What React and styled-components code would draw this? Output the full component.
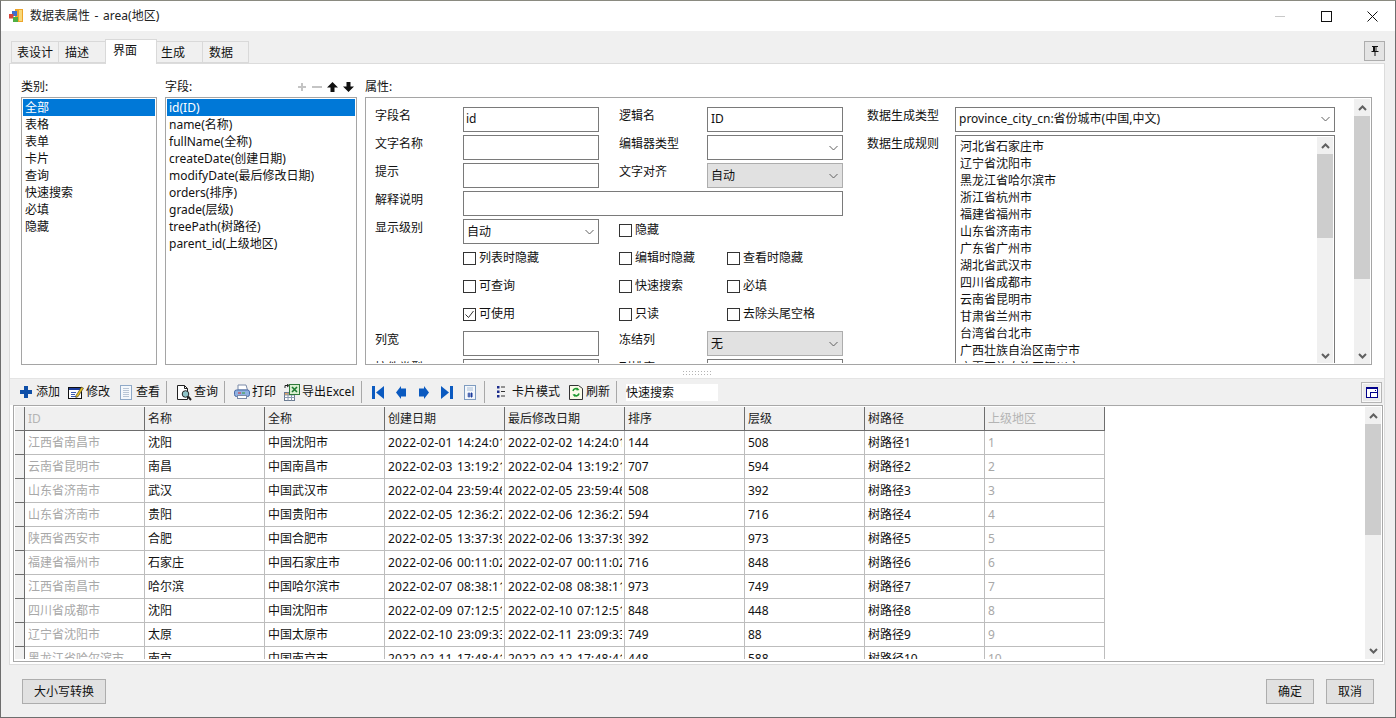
import React from "react";
import styled, { createGlobalStyle } from "styled-components";

const Global = createGlobalStyle`
  html, body { margin: 0; padding: 0; height: 100%; background: #f0f0f0; overflow: hidden; }
  * { box-sizing: border-box; }
  body { font: 12px/16px "Noto Sans", "Noto Sans CJK SC", sans-serif; color: #111; }
`;

const Frame = styled.div`
  width: 1396px; height: 718px; display: flex; flex-direction: column;
  background: #f0f0f0; border: 1px solid #6e6e6e; border-top-color: #8a8a80; overflow: hidden;
`;
const TitleBar = styled.div`
  flex: 0 0 30px; background: #fff; display: flex; align-items: center; padding-left: 8px; gap: 6px;
  font-size: 12px; color: #222;
`;
const TitleText = styled.div`flex: 1; word-spacing: 1.5px;`;
const WinButtons = styled.div`display: flex; margin-right: 0;`;
const WinButton = styled.div`
  width: 46px; height: 30px; display: flex; align-items: center; justify-content: center;
`;
const TabRow = styled.div`
  flex: 0 0 32px; display: flex; align-items: flex-end; padding: 0 10px 0 10px; position: relative;
`;
const Tab = styled.div`
  height: ${p => p.$active ? 25 : 22}px; padding-left: ${p => p.$pl}px; width: ${p => p.$w}px;
  margin-bottom: ${p => p.$active ? -1 : 0}px; z-index: ${p => p.$active ? 2 : 1};
  background: ${p => p.$active ? "#fff" : "#f0f0f0"};
  border: 1px solid #d9d9d9; border-bottom: ${p => p.$active ? "none" : "1px solid #d9d9d9"}; margin-right: -1px;
  line-height: 21px;
  white-space: nowrap;
`;
const PinButton = styled.button`
  margin-left: auto; margin-bottom: 2px; width: 21px; height: 20px; padding: 0; background: #e4e4e4;
  border: 1px solid #adadad; display: flex; align-items: center; justify-content: center;
`;
const Panel = styled.div`
  flex: 0 0 602px; margin: 0 10px 0 8px; background: #fff; border: 1px solid #dcdcdc; display: flex; flex-direction: column;
`;
const Upper = styled.div`
  flex: 0 0 301px; display: flex; gap: 8px; padding: 14px 12px 0 11px;
`;
const Col = styled.div`
  width: ${p => p.$w ? p.$w + "px" : "auto"}; flex: ${p => p.$w ? "0 0 auto" : 1}; display: flex; flex-direction: column; min-width: 0;
`;
const ColHead = styled.div`
  flex: 0 0 19px; display: flex; align-items: center; justify-content: space-between; padding-bottom: 2px;
  line-height: 16px;
`;
const MoveIcons = styled.div`display: flex; gap: 5px; padding-right: 3px;`;
const ListBox = styled.div`
  height: 268px; border: 1px solid #a5a5a5; padding: 1px;
`;
const ListItem = styled.div`
  height: 17px; line-height: 17px; padding-left: 2px; white-space: nowrap;
  background: ${p => p.$sel ? "#0078d7" : "transparent"}; color: ${p => p.$sel ? "#fff" : "#111"};
`;
const PropBox = styled.div`
  height: 268px; border: 1px solid #a5a5a5; display: flex; overflow: hidden; padding: 0;
`;
const PropForm = styled.div`
  flex: 0 0 988px; padding: 9px 0 0 9px; display: grid;
  grid-template-columns: 88px 136px 20px 88px 20px 116px 24px 88px 380px;
  grid-auto-rows: 25px; row-gap: 3px; height: 265px; overflow: hidden; align-content: start;
`;
const PropLabel = styled.div`
  grid-column: ${p => p.$col}; line-height: 17px; white-space: nowrap;
`;
const Field = styled.div`
  grid-column: ${p => p.$col}; height: 25px; border: 1px solid ${p => p.$gray ? "#adadad" : "#7a7a7a"};
  background: ${p => p.$gray ? "#e1e1e1" : "#fff"}; padding: 0 4px 0 ${p => p.$pl || 3}px;
  padding-bottom: ${p => p.$up ? 2 : 0}px;
  display: flex; align-items: center; justify-content: space-between; line-height: 16px; white-space: nowrap; overflow: hidden;
`;
const Check = styled.label`
  grid-column: ${p => p.$col}; display: flex; align-items: center; gap: 3px; height: 25px; padding-bottom: 3px; white-space: nowrap;
`;
const CheckBoxMark = styled.span`
  width: 13px; height: 13px; border: 1px solid #333; background: #fff; display: flex; align-items: center; justify-content: center; flex: none;
`;
const RuleBox = styled.div`
  grid-column: 9; grid-row: 2 / span 9; height: 229px; border: 1px solid #7a7a7a; border-bottom: none; display: flex; overflow: hidden;
`;
const RuleList = styled.div`flex: 1; padding: 2px 0 0 4px; line-height: 17px; overflow: hidden; white-space: nowrap;`;
const Scroll = styled.div`
  flex: 0 0 16px; width: 16px; background: #f0f0f0; display: flex; flex-direction: column; margin: ${p => p.$m || 0};
`;
const ScrollArrow = styled.div`
  flex: 0 0 17px; display: flex; align-items: center; justify-content: center;
`;
const ScrollThumb = styled.div`flex: 0 0 ${p => p.$h}px; background: #cdcdcd;`;
const ScrollTrack = styled.div`flex: 1;`;
const Splitter = styled.div`
  flex: 0 0 13px; display: flex; align-items: center; justify-content: center; position: relative; padding-left: 0;
`;
const Grip = styled.div`
  width: 30px; height: 6px; margin-top: 3px;
  background-image: radial-gradient(#b4b4b4 0.7px, transparent 0.8px);
  background-size: 3px 3px;
`;
const ToolbarRow = styled.div`
  flex: 0 0 27px; background: #f0f0f0; border-top: 1px solid #e4e4e4; display: flex; align-items: center; padding: 0 2px 0 10px;
`;
const ToolButton = styled.div`
  display: flex; align-items: center; gap: ${p => p.$gap ?? 2}px; height: 22px; white-space: nowrap;
  margin-right: ${p => p.$mr ?? 0}px; width: ${p => p.$w ? p.$w + "px" : "auto"};
`;
const ToolSep = styled.div`width: 1px; height: 22px; background: #a8a8a8; margin-right: ${p => p.$mr ?? 9}px;`;
const SearchBox = styled.div`
  width: 92px; height: 17px; background: #fff; line-height: 17px; color: #111; white-space: nowrap;
`;
const DockButton = styled.button`
  margin-left: auto; width: 21px; height: 21px; padding: 0; background: #e9e9e9; border: 1px solid #b5b5b5; outline: 1px solid #f8f8f8; outline-offset: -2px;
  display: flex; align-items: center; justify-content: center;
`;
const GridBox = styled.div`
  flex: 0 0 257px; margin: 0 1px 0 3px; border: 1px solid #a8a8a8; display: flex; background: #fff; overflow: hidden; padding: 1px 1px 2px 1px;
`;
const GridMain = styled.div`flex: 1; overflow: hidden; min-width: 0;`;
const GRow = styled.div`
  display: flex; height: 24px; width: 1091px; overflow: hidden;
`;
const Indicator = styled.div`
  flex: 0 0 10px; background: #f0f0f0;
  border-right: 1px solid #6d6d6d; border-bottom: 1px solid #6d6d6d;
`;
const HCell = styled.div`
  flex: 0 0 120px; min-width: 0; background: #f0f0f0; padding: 0 0 0 3px; line-height: 23px; color: ${p => p.$dim ? "#b4b4b4" : "#222"};
  border-right: 1px solid #6d6d6d; border-bottom: 1px solid #6d6d6d; white-space: nowrap; overflow: hidden;
`;
const Cell = styled.div`
  flex: 0 0 120px; min-width: 0; overflow: hidden; line-height: 23px; color: ${p => p.$dim ? "#a8a8a8" : "#111"};
  border-right: 1px solid #bdbdbd; border-bottom: 1px solid #bdbdbd;
`;
const CellText = styled.span`
  display: block; margin: 0 2px 0 3px; white-space: nowrap; overflow: hidden;
  letter-spacing: ${p => p.$date ? ".2px" : 0}; word-spacing: ${p => p.$date ? "1px" : 0};
`;
const Footer = styled.div`
  flex: 1; display: flex; justify-content: space-between; padding: 14px 21px 0 21px;
`;
const FootGroup = styled.div`display: flex; gap: 12px;`;
const FootButton = styled.button`
  width: ${p => p.$w}px; height: 25px; background: #e1e1e1; border: 1px solid #adadad; padding: 0;
  font: 12px/16px "Noto Sans", "Noto Sans CJK SC", sans-serif; color: #111;
`;

const Chevron = ({ color = "#606060" }) => (
  <svg width="9" height="6" viewBox="0 0 9 6"><path d="M.5 1l4 4 4-4" fill="none" stroke={color} strokeWidth="1" /></svg>
);
const ScrollUp = () => (
  <svg width="9" height="6" viewBox="0 0 9 6"><path d="M1 5l3.500-3.500L8 5" fill="none" stroke="#606060" strokeWidth="2" /></svg>
);
const ScrollDown = () => (
  <svg width="9" height="6" viewBox="0 0 9 6"><path d="M1 1l3.500 3.500L8 1" fill="none" stroke="#606060" strokeWidth="2" /></svg>
);
const AppIcon = () => (
  <svg width="15" height="14" viewBox="0 0 15 14">
    <rect x="6" y="0" width="8" height="13" fill="#eda52a" />
    <rect x="10" y="1" width="3" height="11" fill="#f9d878" />
    <rect x="3" y="2" width="5" height="5" fill="#3f6fd0" />
    <rect x="0" y="5" width="4.500" height="4.500" fill="#d8453a" />
    <rect x="4" y="8" width="5" height="5" fill="#4fb043" />
  </svg>
);
const Plus = ({ c }) => (<svg width="10" height="10" viewBox="0 0 10 10"><path d="M4 1h2v3h3v2H6v3H4V6H1V4h3z" fill={c} /></svg>);
const Minus = () => (<svg width="10" height="10" viewBox="0 0 10 10"><rect x="0" y="4" width="10" height="2" fill="#c4c4c4" /></svg>);
const Up = () => (<svg width="11" height="10" viewBox="0 0 11 10"><path d="M5.500 0L11 5.500H7.500V10h-4V5.500H0z" fill="#111" /></svg>);
const Down = () => (<svg width="11" height="10" viewBox="0 0 11 10"><path d="M5.500 10L11 4.500H7.500V0h-4v4.500H0z" fill="#111" /></svg>);

const IAdd = () => (<svg width="12" height="12" viewBox="0 0 12 12"><path d="M4 0h4v4h4v4H8v4H4V8H0V4h4z" fill="#0f4fa8" /></svg>);
const IEdit = () => (
  <svg width="16" height="16" viewBox="0 0 16 16">
    <rect x=".5" y="3.500" width="13" height="11" fill="#fff" stroke="#111" />
    <rect x="1" y="4" width="12" height="2" fill="#1c3c9c" />
    <path d="M3 8.500h5M3 10.500h4M3 12.500h6" stroke="#3b5cb0" />
    <path d="M8 11.500l5.500-8.500 2 1.200-5.500 8.500-2.200 .8z" fill="#e8c020" stroke="#333" strokeWidth=".6" />
  </svg>
);
const IView = () => (
  <svg width="12" height="15" viewBox="0 0 12 15">
    <rect x=".5" y=".5" width="11" height="14" fill="#f4f8fc" stroke="#8fa9c8" />
    <path d="M3 3.500h6M3 5.500h6M3 7.500h6M3 9.500h6M3 11.500h6" stroke="#b9c6d6" />
  </svg>
);
const IQuery = () => (
  <svg width="16" height="17" viewBox="0 0 16 17">
    <path d="M1.500 1.500h7l3 3v11h-10z" fill="#fff" stroke="#222" />
    <path d="M8.500 1.500v3h3" fill="none" stroke="#222" />
    <circle cx="9.500" cy="10" r="3.300" fill="#8fc4c8" stroke="#222" />
    <path d="M12 12.500l3 3.500" stroke="#222" strokeWidth="2" />
  </svg>
);
const IPrint = () => (
  <svg width="16" height="16" viewBox="0 0 16 16">
    <path d="M4 1h8l1.500 5H4z" fill="#fff" stroke="#7b8aa8" />
    <rect x=".5" y="6" width="15" height="6.500" rx="2" fill="#8fb0e0" stroke="#4a6ca8" />
    <rect x="3.500" y="11.500" width="9" height="3" fill="#fff" stroke="#7b8aa8" />
    <rect x="4" y="8.500" width="3" height="1" fill="#d83030" />
    <rect x="8" y="8.500" width="3" height="1" fill="#38a038" />
  </svg>
);
const IExcel = () => (
  <svg width="16" height="17" viewBox="0 0 16 17">
    <rect x=".5" y="8.500" width="10" height="8" fill="#fff" stroke="#6a7a90" />
    <rect x="1" y="9" width="9" height="2" fill="#e8a860" />
    <path d="M.5 11h10M.5 13.500h10M4 8.500v8M7.500 8.500v8" stroke="#8a9ab0" />
    <rect x="5.500" y=".5" width="10" height="10" fill="#d8eed0" stroke="#2f7a3a" />
    <path d="M8 3l5 5M13 3l-5 5" stroke="#1c7a30" strokeWidth="1.600" />
    <path d="M1 4V1.500h3M3 0l2 1.500L3 3" fill="none" stroke="#222" />
  </svg>
);
const First = () => (<svg width="12" height="13" viewBox="0 0 12 13"><rect width="3" height="13" fill="#0b5ac0" /><path d="M12 0v13L4 6.500z" fill="#0b5ac0" /></svg>);
const Prev = () => (<svg width="10" height="13" viewBox="0 0 10 13"><path d="M5 0v2.500h5v8H5V13L0 6.500z" fill="#0b5ac0" /></svg>);
const Next = () => (<svg width="10" height="13" viewBox="0 0 10 13"><path d="M5 0v2.500H0v8h5V13l5-6.500z" fill="#0b5ac0" /></svg>);
const Last = () => (<svg width="12" height="13" viewBox="0 0 12 13"><rect x="9" width="3" height="13" fill="#0b5ac0" /><path d="M0 0v13l8-6.500z" fill="#0b5ac0" /></svg>);
const IPage = () => (
  <svg width="12" height="15" viewBox="0 0 12 15">
    <rect x=".5" y=".5" width="11" height="14" fill="#f4f8fc" stroke="#7f9cc0" />
    <path d="M3 3h6M3 5h6" stroke="#a9bdd6" />
    <path d="M5 7.500v5M7.500 7.500v5M3.500 9h5.500M3.500 11h5.500" stroke="#1c3c9c" />
  </svg>
);
const ICard = () => (
  <svg width="8" height="12" viewBox="0 0 8 12">
    <path d="M0 0h2.500v2.500H0zM0 4.500h2.500V7H0zM0 9h2.500v2.500H0z" fill="#1c2c8c" />
    <path d="M4 1h4M4 5.500h4M4 10h4" stroke="#333" />
  </svg>
);
const IRefresh = () => (
  <svg width="14" height="16" viewBox="0 0 14 16">
    <path d="M.5 1.500h9l4 3v11H.5z" fill="#fbfbe8" stroke="#333" />
    <path d="M4 7a3 3 0 0 1 5-1.500" fill="none" stroke="#1f9a30" strokeWidth="1.600" />
    <path d="M10 9.500a3 3 0 0 1-5 1.500" fill="none" stroke="#1f9a30" strokeWidth="1.600" />
    <path d="M8 3.500l2.500 2.500-3 .5zM6 13l-2.500-2.500 3-.5z" fill="#1f9a30" />
  </svg>
);
const Pin = () => (
  <svg width="10" height="12" viewBox="0 0 10 12"><path d="M2 1h6v1H7v4h1.500v1H5.500v4h-1V7H1.500V6H3V2H2z" fill="#111" /><rect x="5.500" y="2" width="1" height="4" fill="#fff" /></svg>
);
const Dock = () => (
  <svg width="12" height="11" viewBox="0 0 12 11">
    <rect x=".5" y=".5" width="11" height="10" fill="#fff" stroke="#00008b" />
    <rect x="0" y="0" width="12" height="2" fill="#00008b" />
    <rect x="9" y="3" width="1" height="1" fill="#00008b" />
    <rect x="4" y="5" width="8" height="1" fill="#00008b" />
    <rect x="4" y="5" width="1" height="6" fill="#00008b" />
  </svg>
);

const cats = ["全部", "表格", "表单", "卡片", "查询", "快速搜索", "必填", "隐藏"];
const fields = ["id(ID)", "name(名称)", "fullName(全称)", "createDate(创建日期)", "modifyDate(最后修改日期)", "orders(排序)", "grade(层级)", "treePath(树路径)", "parent_id(上级地区)"];
const rules = ["河北省石家庄市", "辽宁省沈阳市", "黑龙江省哈尔滨市", "浙江省杭州市", "福建省福州市", "山东省济南市", "广东省广州市", "湖北省武汉市", "四川省成都市", "云南省昆明市", "甘肃省兰州市", "台湾省台北市", "广西壮族自治区南宁市", "宁夏回族自治区银川市"];
const headers = ["ID", "名称", "全称", "创建日期", "最后修改日期", "排序", "层级", "树路径", "上级地区"];
const rows = [
  ["江西省南昌市", "沈阳", "中国沈阳市", "2022-02-01 14:24:01", "2022-02-02 14:24:01", "144", "508", "树路径1", "1"],
  ["云南省昆明市", "南昌", "中国南昌市", "2022-02-03 13:19:21", "2022-02-04 13:19:21", "707", "594", "树路径2", "2"],
  ["山东省济南市", "武汉", "中国武汉市", "2022-02-04 23:59:46", "2022-02-05 23:59:46", "508", "392", "树路径3", "3"],
  ["山东省济南市", "贵阳", "中国贵阳市", "2022-02-05 12:36:27", "2022-02-06 12:36:27", "594", "716", "树路径4", "4"],
  ["陕西省西安市", "合肥", "中国合肥市", "2022-02-05 13:37:39", "2022-02-06 13:37:39", "392", "973", "树路径5", "5"],
  ["福建省福州市", "石家庄", "中国石家庄市", "2022-02-06 00:11:02", "2022-02-07 00:11:02", "716", "848", "树路径6", "6"],
  ["江西省南昌市", "哈尔滨", "中国哈尔滨市", "2022-02-07 08:38:11", "2022-02-08 08:38:11", "973", "749", "树路径7", "7"],
  ["四川省成都市", "沈阳", "中国沈阳市", "2022-02-09 07:12:51", "2022-02-10 07:12:51", "848", "448", "树路径8", "8"],
  ["辽宁省沈阳市", "太原", "中国太原市", "2022-02-10 23:09:33", "2022-02-11 23:09:33", "749", "88", "树路径9", "9"],
  ["黑龙江省哈尔滨市", "南京", "中国南京市", "2022-02-11 17:48:41", "2022-02-12 17:48:41", "448", "588", "树路径10", "10"],
];

export default function App() {
  return (
    <Frame>
      <Global />
      <TitleBar>
        <AppIcon />
        <TitleText>数据表属性 - area(地区)</TitleText>
        <WinButtons>
          <WinButton>
            <svg width="10" height="1" viewBox="0 0 10 1"><rect width="10" height="1" fill="#c8c8c8" /></svg>
          </WinButton>
          <WinButton>
            <svg width="11" height="11" viewBox="0 0 11 11"><rect x=".5" y=".5" width="10" height="10" fill="none" stroke="#111" /></svg>
          </WinButton>
          <WinButton>
            <svg width="11" height="11" viewBox="0 0 11 11"><path d="M.5 .5l10 10M10.500 .5l-10 10" stroke="#111" /></svg>
          </WinButton>
        </WinButtons>
      </TitleBar>
      <TabRow>
        <Tab $w={48} $pl={5}>表设计</Tab>
        <Tab $w={48} $pl={6}>描述</Tab>
        <Tab $active $w={52} $pl={7}>界面</Tab>
        <Tab $w={47} $pl={4}>生成</Tab>
        <Tab $w={47} $pl={6}>数据</Tab>
        <PinButton><Pin /></PinButton>
      </TabRow>
      <Panel>
        <Upper>
          <Col $w={136}>
            <ColHead>类别:</ColHead>
            <ListBox>{cats.map((c, i) => <ListItem key={c} $sel={i === 0}>{c}</ListItem>)}</ListBox>
          </Col>
          <Col $w={192}>
            <ColHead>字段:
              <MoveIcons><Plus c="#c4c4c4" /><Minus /><Up /><Down /></MoveIcons>
            </ColHead>
            <ListBox>{fields.map((c, i) => <ListItem key={c} $sel={i === 0}>{c}</ListItem>)}</ListBox>
          </Col>
          <Col>
            <ColHead>属性:</ColHead>
            <PropBox>
              <PropForm>
                <PropLabel $col="1">字段名</PropLabel>
                <Field $col="2" $up $pl={2}>id</Field>
                <PropLabel $col="4">逻辑名</PropLabel>
                <Field $col="5 / span 2" $up>ID</Field>
                <PropLabel $col="8">数据生成类型</PropLabel>
                <Field $col="9" $up>province_city_cn:省份城市(中国,中文)<Chevron /></Field>

                <PropLabel $col="1">文字名称</PropLabel>
                <Field $col="2" />
                <PropLabel $col="4">编辑器类型</PropLabel>
                <Field $col="5 / span 2"><span /><Chevron /></Field>
                <PropLabel $col="8">数据生成规则</PropLabel>
                <RuleBox>
                  <RuleList>{rules.map(r => <div key={r}>{r}</div>)}</RuleList>
                  <Scroll $m="1px 1px 0 0">
                    <ScrollArrow><ScrollUp /></ScrollArrow>
                    <ScrollThumb $h={84} />
                    <ScrollTrack />
                    <ScrollArrow><ScrollDown /></ScrollArrow>
                  </Scroll>
                </RuleBox>

                <PropLabel $col="1">提示</PropLabel>
                <Field $col="2" />
                <PropLabel $col="4">文字对齐</PropLabel>
                <Field $col="5 / span 2" $gray>自动<Chevron /></Field>

                <PropLabel $col="1">解释说明</PropLabel>
                <Field $col="2 / span 5" />

                <PropLabel $col="1">显示级别</PropLabel>
                <Field $col="2">自动<Chevron /></Field>
                <Check $col="4 / span 2"><CheckBoxMark />隐藏</Check>

                <Check $col="2"><CheckBoxMark />列表时隐藏</Check>
                <Check $col="4 / span 2"><CheckBoxMark />编辑时隐藏</Check>
                <Check $col="6"><CheckBoxMark />查看时隐藏</Check>

                <Check $col="2"><CheckBoxMark />可查询</Check>
                <Check $col="4 / span 2"><CheckBoxMark />快速搜索</Check>
                <Check $col="6"><CheckBoxMark />必填</Check>

                <Check $col="2">
                  <CheckBoxMark><svg width="11" height="11" viewBox="0 0 11 11"><path d="M1.500 5.500l3 3 5-6.500" fill="none" stroke="#333" /></svg></CheckBoxMark>可使用
                </Check>
                <Check $col="4 / span 2"><CheckBoxMark />只读</Check>
                <Check $col="6"><CheckBoxMark />去除头尾空格</Check>

                <PropLabel $col="1">列宽</PropLabel>
                <Field $col="2" />
                <PropLabel $col="4">冻结列</PropLabel>
                <Field $col="5 / span 2" $gray>无<Chevron /></Field>

                <PropLabel $col="1">控件类型</PropLabel>
                <Field $col="2" />
                <PropLabel $col="4">列排序</PropLabel>
                <Field $col="5 / span 2" />
              </PropForm>
              <Scroll $m="1px 1px 0 0">
                <ScrollArrow><ScrollUp /></ScrollArrow>
                <ScrollThumb $h={163} />
                <ScrollTrack />
                <ScrollArrow><ScrollDown /></ScrollArrow>
              </Scroll>
            </PropBox>
          </Col>
        </Upper>
        <Splitter><Grip /></Splitter>
        <ToolbarRow>
          <ToolButton $gap={4} $mr={8}><IAdd />添加</ToolButton>
          <ToolButton $mr={10}><IEdit />修改</ToolButton>
          <ToolButton $gap={4} $mr={6}><IView />查看</ToolButton>
          <ToolSep />
          <ToolButton $mr={6}><IQuery />查询</ToolButton>
          <ToolSep />
          <ToolButton $mr={8}><IPrint />打印</ToolButton>
          <ToolButton $w={77}><IExcel />导出Excel</ToolButton>
          <ToolSep $mr={10} />
          <ToolButton $mr={12}><First /></ToolButton>
          <ToolButton $mr={13}><Prev /></ToolButton>
          <ToolButton $mr={12}><Next /></ToolButton>
          <ToolButton $mr={11}><Last /></ToolButton>
          <ToolButton $mr={8}><IPage /></ToolButton>
          <ToolSep $mr={12} />
          <ToolButton $gap={7} $mr={9}><ICard />卡片模式</ToolButton>
          <ToolButton $gap={3} $mr={6}><IRefresh />刷新</ToolButton>
          <ToolSep />
          <SearchBox>快速搜索</SearchBox>
          <DockButton><Dock /></DockButton>
        </ToolbarRow>
        <GridBox>
          <GridMain>
            <GRow>
              <Indicator />
              {headers.map((h, i) => <HCell key={h} $dim={i === 0 || i === 8}>{h}</HCell>)}
            </GRow>
            {rows.map(r => (
              <GRow key={r[3]}>
                <Indicator />
                {r.map((c, i) => (
                  <Cell key={i} $dim={i === 0 || i === 8}>
                    <CellText $date={i === 3 || i === 4}>{c}</CellText>
                  </Cell>
                ))}
              </GRow>
            ))}
          </GridMain>
          <Scroll>
            <ScrollArrow><ScrollUp /></ScrollArrow>
            <ScrollThumb $h={111} />
            <ScrollTrack />
            <ScrollArrow><ScrollDown /></ScrollArrow>
          </Scroll>
        </GridBox>
      </Panel>
      <Footer>
        <FootButton $w={84}>大小写转换</FootButton>
        <FootGroup>
          <FootButton $w={48}>确定</FootButton>
          <FootButton $w={48}>取消</FootButton>
        </FootGroup>
      </Footer>
    </Frame>
  );
}
